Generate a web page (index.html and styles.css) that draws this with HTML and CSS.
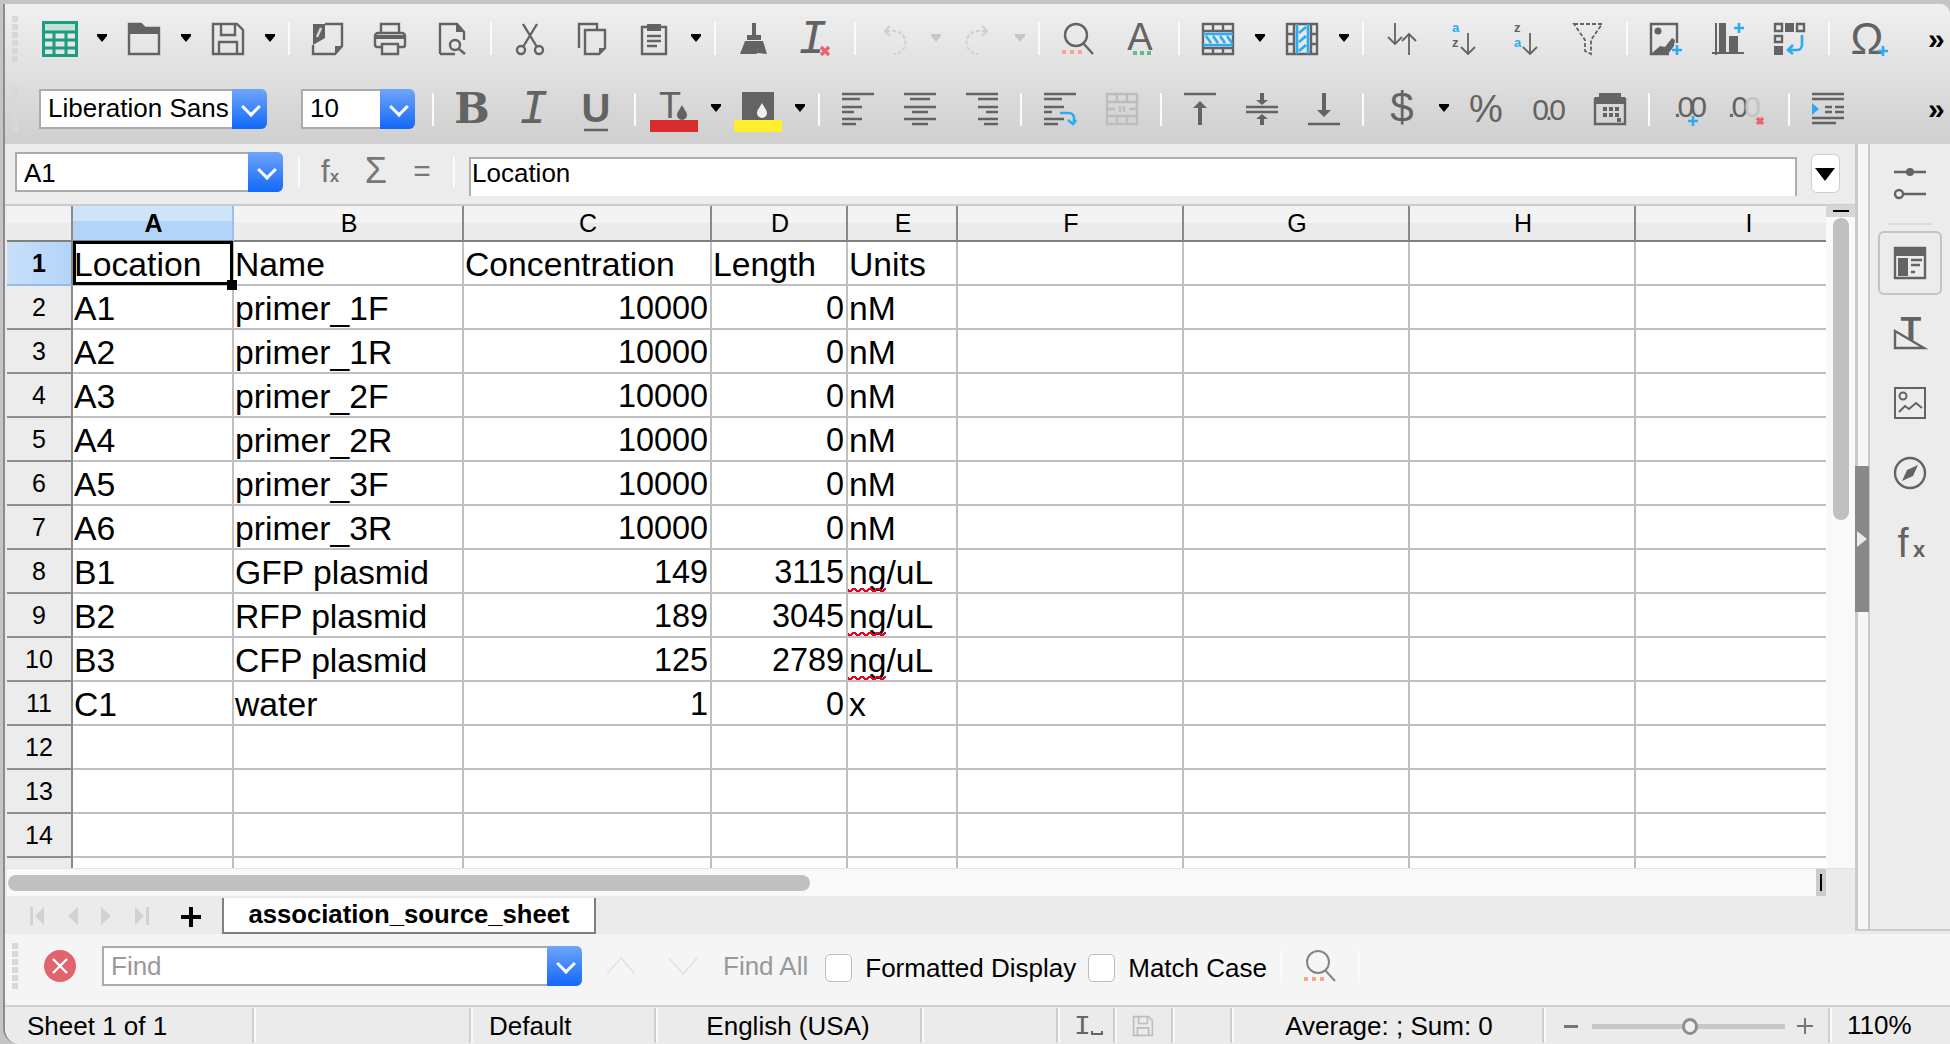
FILE: index.html
```html
<!DOCTYPE html>
<html lang="en">
<head>
    <meta charset="UTF-8">
    <title>association_source_sheet - LibreOffice Calc</title>
    <link rel="stylesheet" href="styles.css">
</head>
<body>
<div class="window">

    <div class="toolbars">
        <div class="toolbar first-row">
            <div class="grip"></div>
            <div class="tool"><svg class="ic wide" viewBox="0 0 36 36"><rect class="appband" x="2" y="2" width="32" height="8"/><path class="app" d="M1.5 1.5h33v33h-33zM1 11h34M1 19h34M1 27h34M12 11v24M24 11v24"/></svg></div>
            <div class="drop"></div>
            <div class="tool"><svg class="ic" viewBox="0 0 32 32"><path d="M1 1h12l4 4h14v26H1z"/><path class="f" d="M1 1h12l4 4h14v6H1z"/></svg></div>
            <div class="drop"></div>
            <div class="tool"><svg class="ic" viewBox="0 0 32 32"><path d="M1 1h24l6 6v24H1zM9 1v11h14V1M7 31V19h18v12"/></svg></div>
            <div class="drop"></div>
            <div class="sep"></div>
            <div class="tool"><svg class="ic" viewBox="0 0 32 32"><path d="M13 1h17v22l-7 8H1v-9"/><path class="f" d="M1 1h12v14L1 22zM23 31v-8h7z"/><path class="lite" d="M5 14l4-9"/></svg></div>
            <div class="tool"><svg class="ic" viewBox="0 0 32 32"><path d="M7 10V1h18v9M7 24H3a2 2 0 0 1-2-2v-9a3 3 0 0 1 3-3h24a3 3 0 0 1 3 3v9a2 2 0 0 1-2 2h-4M8 21h16v10H8z"/><path class="f" d="M2 12h28v4H2z"/></svg></div>
            <div class="tool"><svg class="ic" viewBox="0 0 32 32"><path d="M4 31V1h17l7 8v8M4 31h15"/><path class="f" d="M20 1l8 8h-8z"/><circle cx="19" cy="22" r="5"/><path d="M23 26l6 5"/></svg></div>
            <div class="sep"></div>
            <div class="tool"><svg class="ic" viewBox="0 0 32 32"><circle cx="7" cy="27" r="4"/><circle cx="25" cy="27" r="4"/><path d="M9 24L23 1M23 24L9 1"/></svg></div>
            <div class="tool"><svg class="ic" viewBox="0 0 32 32"><path d="M3 25V1h18v6M9 7h20v18l-6 6H9z"/><path class="f" d="M23 31v-6h6z"/></svg></div>
            <div class="tool"><svg class="ic" viewBox="0 0 32 32"><path d="M9 4H4v27h24V4h-5M9 13h14M9 18h14M9 23h10"/><path class="f" d="M9 1h14v7H9z"/></svg></div>
            <div class="drop"></div>
            <div class="sep"></div>
            <div class="tool"><svg class="ic" viewBox="0 0 32 32"><path class="f" d="M14 0h4v12h-4zM9 12h14v5H9zM7 18h18l4 13-9-1-2 1H2z"/></svg></div>
            <div class="tool"><svg class="ic" viewBox="0 0 32 32"><text class="glyph-i" x="-2" y="30">I</text><path class="redx" d="M21 24l8 8M29 24l-8 8"/></svg></div>
            <div class="sep"></div>
            <div class="tool"><svg class="ic off" viewBox="0 0 32 32"><path stroke-dasharray="4 2" d="M8 8h8a11.500 11.500 0 1 1 0 23"/><path d="M12 3L7 8l5 5"/></svg></div>
            <div class="drop off"></div>
            <div class="tool"><svg class="ic off" viewBox="0 0 32 32"><path stroke-dasharray="4 2" d="M24 8h-8a11.500 11.500 0 1 0 0 23"/><path d="M20 3l5 5-5 5"/></svg></div>
            <div class="drop off"></div>
            <div class="sep"></div>
            <div class="tool"><svg class="ic" viewBox="0 0 32 32"><circle cx="14" cy="12" r="11"/><path d="M21 20l10 11"/><path class="orange" d="M0 27h4v4H0zM8 27h4v4H8zM16 27h4v4h-4z"/></svg></div>
            <div class="tool"><svg class="ic" viewBox="0 0 32 32"><text class="glyph" x="16" y="27" font-size="38">A</text><path class="green" d="M9 28h4v4H9zM16 28h4v4h-4zM23 28h4v4h-4z"/></svg></div>
            <div class="sep"></div>
            <div class="tool"><svg class="ic" viewBox="0 0 32 32"><path d="M1 1h30v30H1zM1 8h30M1 25h30M11 1v7M21 1v7M11 25v6M21 25v6"/><path class="blue" d="M1 11h30M1 22h30M4 13l5 7M11 13l5 7M18 13l5 7M25 13l5 7"/></svg></div>
            <div class="drop"></div>
            <div class="tool"><svg class="ic" viewBox="0 0 32 32"><path d="M1 1h30v30H1zM8 1v30M25 1v30M1 11h7M1 21h7M25 11h6M25 21h6"/><path class="blue" d="M11 1v30M22 1v30M13 10l7-6M13 19l7-6M13 28l7-6"/></svg></div>
            <div class="drop"></div>
            <div class="sep"></div>
            <div class="tool"><svg class="ic thin" viewBox="0 0 32 32"><path d="M9 0v21M2 14l7 7 7-7M23 32V11M16 18l7-7 7 7"/></svg></div>
            <div class="tool"><svg class="ic thin" viewBox="0 0 32 32"><text class="tiny-blue" x="4" y="9">a</text><text class="tiny" x="4" y="24">z</text><path d="M20 10v21M13 24l7 7 7-7"/></svg></div>
            <div class="tool"><svg class="ic thin" viewBox="0 0 32 32"><text class="tiny" x="4" y="9">z</text><text class="tiny-blue" x="4" y="24">a</text><path d="M20 10v21M13 24l7 7 7-7"/></svg></div>
            <div class="tool"><svg class="ic thin" viewBox="0 0 32 32"><path stroke-dasharray="4 2" d="M2 1h28L19 17v14l-6-3V17z"/></svg></div>
            <div class="sep"></div>
            <div class="tool"><svg class="ic" viewBox="0 0 32 32"><path d="M27 20V1H1v30h18"/><circle class="f" cx="8" cy="8" r="3.500"/><path class="f" d="M1 31l9-8 5 1 7-9 3 2-1 6-6 8z"/><path class="blue" d="M27 22v10M22 27h10"/></svg></div>
            <div class="tool"><svg class="ic" viewBox="0 0 32 32"><path class="f" d="M3 0h2v32H3zM7 0h7v30H7zM17 13h9v17h-9zM0 29h32v2H0z"/><path class="blue" d="M27 0v10M22 5h10"/></svg></div>
            <div class="tool"><svg class="ic" viewBox="0 0 32 32"><path d="M1 1h7v7H1zM23 1h7v7h-7zM1 13h7v6H1z"/><path class="f" d="M11 0h9v9h-9zM0 23h9v9H0z"/><path class="blue" d="M28 12v10a5 5 0 0 1-5 5h-8M19 22l-5 5 5 4"/></svg></div>
            <div class="sep"></div>
            <div class="tool"><svg class="ic" viewBox="0 0 32 32"><text class="glyph" x="15" y="31" font-size="44">Ω</text><path class="blue" d="M31 23v10M26 28h10"/></svg></div>
            <div class="more">»</div>
        </div>

        <div class="toolbar">
            <div class="grip"></div>
            <div class="combo font-name"><span>Liberation Sans</span><b class="combo-btn"></b></div>
            <div class="combo font-size"><span>10</span><b class="combo-btn"></b></div>
            <div class="sep"></div>
            <div class="tool"><svg class="ic" viewBox="0 0 32 32"><text class="glyph bold-b" x="16" y="30" font-size="42">B</text></svg></div>
            <div class="tool"><svg class="ic" viewBox="0 0 32 32"><text class="glyph-i" x="1" y="30">I</text></svg></div>
            <div class="tool"><svg class="ic" viewBox="0 0 32 32"><text class="glyph bold-u" x="16" y="29" font-size="40">U</text><path d="M4 37h24"/></svg></div>
            <div class="sep"></div>
            <div class="tool"><svg class="swatch" viewBox="0 0 48 46"><text class="glyph" x="20" y="32" font-size="36">T</text><path class="f" d="M32 19c2 4 5 7 5 10a5 5 0 0 1-10 0c0-3 3-6 5-10z"/><rect class="red" y="34" width="48" height="12"/></svg></div>
            <div class="drop"></div>
            <div class="tool"><svg class="swatch" viewBox="0 0 48 46"><path class="f" d="M8 6h32v28H8z"/><path class="white" d="M28 17c2 4 5 7 5 10a5 5 0 0 1-10 0c0-3 3-6 5-10z"/><rect class="yellow" y="34" width="48" height="12"/></svg></div>
            <div class="drop"></div>
            <div class="sep"></div>
            <div class="tool"><svg class="ic" viewBox="0 0 32 32"><path d="M0 1h32M0 6h18M0 14h20M0 19h12M0 26h20M0 31h14"/></svg></div>
            <div class="tool"><svg class="ic" viewBox="0 0 32 32"><path d="M0 1h32M6 6h20M0 14h32M8 19h16M0 26h32M8 31h16"/></svg></div>
            <div class="tool"><svg class="ic" viewBox="0 0 32 32"><path d="M0 1h32M12 6h20M12 14h20M20 19h12M12 26h20M18 31h14"/></svg></div>
            <div class="sep"></div>
            <div class="tool"><svg class="ic" viewBox="0 0 32 32"><path d="M0 1h32M0 6h18M0 14h20M0 19h8M0 26h20M0 31h14"/><path class="blue" d="M16 20h9a5 5 0 0 1 5 5v6M24 27l5 4 3-4"/></svg></div>
            <div class="tool"><svg class="ic mute" viewBox="0 0 32 32"><path d="M1 1h30v30H1zM1 9h30M1 23h30M11 1v8M21 1v8M11 23v8M21 23v8M1 16h8M23 16h8M14 13v6M18 13v6"/></svg></div>
            <div class="sep"></div>
            <div class="tool"><svg class="ic" viewBox="0 0 32 32"><path d="M0 1h32"/><path class="f" d="M16 8l7 7h-5v17h-4V15H9z"/></svg></div>
            <div class="tool"><svg class="ic" viewBox="0 0 32 32"><path d="M0 14h32M0 19h32"/><path class="f" d="M14 0h4v7h4l-6 5-6-5h4zM16 21l6 5h-4v6h-4v-6h-4z"/></svg></div>
            <div class="tool"><svg class="ic" viewBox="0 0 32 32"><path d="M0 31h32"/><path class="f" d="M14 0h4v17h5l-7 7-7-7h5z"/></svg></div>
            <div class="sep"></div>
            <div class="tool"><svg class="ic" viewBox="0 0 32 32"><text class="glyph" x="16" y="29" font-size="42">$</text></svg></div>
            <div class="drop"></div>
            <div class="tool"><svg class="ic" viewBox="0 0 32 32"><text class="glyph" x="16" y="29" font-size="38">%</text></svg></div>
            <div class="tool"><svg class="ic" viewBox="0 0 32 32"><text class="glyph tight" x="15" y="27" font-size="30">0.0</text></svg></div>
            <div class="tool"><svg class="ic" viewBox="0 0 32 32"><path d="M1 6h30v25H1z"/><path class="f" d="M5 0h22v4h4v7H1V4h4zM9 14h4v4H9zM15 14h4v4h-4zM21 14h4v4h-4zM9 20h4v4H9zM15 20h4v4h-4zM21 20h4v4h-4zM23 25h4v4h-4z"/></svg></div>
            <div class="sep"></div>
            <div class="tool"><svg class="ic" viewBox="0 0 32 32"><text class="glyph tight" x="16" y="24" font-size="30">.00</text><path class="blue" d="M21 23v10M16 28h10"/></svg></div>
            <div class="tool"><svg class="ic" viewBox="0 0 32 32"><text class="glyph tight" x="8" y="24" font-size="30">.0<tspan class="mute-text">0</tspan></text><path class="redx" d="M23 25l6 6M29 25l-6 6"/></svg></div>
            <div class="sep"></div>
            <div class="tool"><svg class="ic" viewBox="0 0 32 32"><path d="M0 1h32M0 6h32M0 25h32M0 30h24"/><path d="M13 14h7M23 14h9M13 19h7M23 19h9"/><path class="fblue" d="M0 10l7 6-7 6z"/></svg></div>
            <div class="more">»</div>
        </div>
    </div>

    <div class="workspace">
        <div class="document">
            <div class="formula-bar">
                <div class="combo name-box"><span>A1</span><b class="combo-btn"></b></div>
                <div class="fsep"></div>
                <span class="f-btn fx">f<small>x</small></span>
                <span class="f-btn sum">Σ</span>
                <span class="f-btn eq">=</span>
                <div class="fsep"></div>
                <div class="formula-input">Location</div>
                <div class="formula-more"></div>
            </div>

            <div class="sheet-row">
                <div class="grid-wrap">
                    <table class="grid">
                        <colgroup>
                            <col class="c-head"><col class="c-a"><col class="c-b"><col class="c-c"><col class="c-d"><col class="c-e"><col class="c-w"><col class="c-w"><col class="c-w"><col class="c-w">
                        </colgroup>
                        <thead>
                            <tr><th class="corner"></th><th class="active">A</th><th>B</th><th>C</th><th>D</th><th>E</th><th>F</th><th>G</th><th>H</th><th>I</th></tr>
                        </thead>
                        <tbody>
                            <tr><th class="active">1</th><td class="cursor">Location</td><td>Name</td><td>Concentration</td><td>Length</td><td>Units</td><td></td><td></td><td></td><td></td></tr>
                            <tr><th>2</th><td>A1</td><td>primer_1F</td><td class="num">10000</td><td class="num">0</td><td>nM</td><td></td><td></td><td></td><td></td></tr>
                            <tr><th>3</th><td>A2</td><td>primer_1R</td><td class="num">10000</td><td class="num">0</td><td>nM</td><td></td><td></td><td></td><td></td></tr>
                            <tr><th>4</th><td>A3</td><td>primer_2F</td><td class="num">10000</td><td class="num">0</td><td>nM</td><td></td><td></td><td></td><td></td></tr>
                            <tr><th>5</th><td>A4</td><td>primer_2R</td><td class="num">10000</td><td class="num">0</td><td>nM</td><td></td><td></td><td></td><td></td></tr>
                            <tr><th>6</th><td>A5</td><td>primer_3F</td><td class="num">10000</td><td class="num">0</td><td>nM</td><td></td><td></td><td></td><td></td></tr>
                            <tr><th>7</th><td>A6</td><td>primer_3R</td><td class="num">10000</td><td class="num">0</td><td>nM</td><td></td><td></td><td></td><td></td></tr>
                            <tr><th>8</th><td>B1</td><td>GFP plasmid</td><td class="num">149</td><td class="num">3115</td><td><span class="spell">ng</span>/uL</td><td></td><td></td><td></td><td></td></tr>
                            <tr><th>9</th><td>B2</td><td>RFP plasmid</td><td class="num">189</td><td class="num">3045</td><td><span class="spell">ng</span>/uL</td><td></td><td></td><td></td><td></td></tr>
                            <tr><th>10</th><td>B3</td><td>CFP plasmid</td><td class="num">125</td><td class="num">2789</td><td><span class="spell">ng</span>/uL</td><td></td><td></td><td></td><td></td></tr>
                            <tr><th>11</th><td>C1</td><td>water</td><td class="num">1</td><td class="num">0</td><td>x</td><td></td><td></td><td></td><td></td></tr>
                            <tr><th>12</th><td></td><td></td><td></td><td></td><td></td><td></td><td></td><td></td><td></td></tr>
                            <tr><th>13</th><td></td><td></td><td></td><td></td><td></td><td></td><td></td><td></td><td></td></tr>
                            <tr><th>14</th><td></td><td></td><td></td><td></td><td></td><td></td><td></td><td></td><td></td></tr>
                            <tr><th></th><td></td><td></td><td></td><td></td><td></td><td></td><td></td><td></td><td></td></tr>
                        </tbody>
                    </table>
                </div>
                <div class="vscroll">
                    <div class="split-v"></div>
                    <div class="vthumb"></div>
                </div>
            </div>

            <div class="hscroll-row">
                <div class="hscroll">
                    <div class="hthumb"></div>
                    <div class="split-h"></div>
                </div>
            </div>

            <div class="tabs">
                <svg class="nav" viewBox="0 0 14 18"><path d="M0 0h3v18H0zM14 0v18L5 9z"/></svg>
                <svg class="nav" viewBox="0 0 14 18"><path d="M13 0v18L3 9z"/></svg>
                <svg class="nav" viewBox="0 0 14 18"><path d="M1 0v18l10-9z"/></svg>
                <svg class="nav" viewBox="0 0 14 18"><path d="M11 0h3v18h-3zM0 0v18l9-9z"/></svg>
                <svg class="add-sheet" viewBox="0 0 20 20"><path d="M8 0h4v8h8v4h-8v8H8v-8H0V8h8z"/></svg>
                <div class="tab">association_source_sheet</div>
            </div>
        </div>

        <div class="deck-strip">
            <div class="deck-handle"></div>
        </div>

        <div class="sidebar">
            <svg class="ic side-top" viewBox="0 0 32 32"><path d="M0 4h32M0 26h32"/><circle class="f" cx="16" cy="4" r="4"/><circle class="ring" cx="5" cy="26" r="4"/></svg>
            <div class="side-sep"></div>
            <div class="side-btn selected"><svg class="ic" viewBox="0 0 32 32"><path d="M1 1h30v30H1z"/><path class="f" d="M1 1h30v8H1zM4 11h10v18H4z"/><path d="M17 13h11M17 18h9M17 25h4"/></svg></div>
            <div class="side-btn"><svg class="ic" viewBox="0 0 32 32"><text class="glyph side-t" x="17" y="23" font-size="34">T</text><path d="M1 31V14l29 17z"/></svg></div>
            <div class="side-btn"><svg class="ic thin-ish" viewBox="0 0 32 32"><path d="M1 1h30v30H1z"/><circle cx="9" cy="9" r="3.500"/><path d="M5 25l6-6 4 3 7-6 6 5"/></svg></div>
            <div class="side-btn"><svg class="ic" viewBox="0 0 32 32"><circle cx="16" cy="16" r="15"/><path class="f" d="M24 8l-5 11-11 5 5-11z"/></svg></div>
            <div class="side-btn"><svg class="ic" viewBox="0 0 32 32"><text class="glyph" x="9" y="30" font-size="40">f<tspan class="side-x" x="25" y="30" font-size="22">x</tspan></text></svg></div>
        </div>
    </div>

    <div class="findbar">
        <div class="grip"></div>
        <div class="tool"><svg class="ic close" viewBox="0 0 32 32"><circle cx="16" cy="16" r="16"/><path d="M9 9l14 14M23 9L9 23"/></svg></div>
        <div class="combo find-box"><span>Find</span><b class="combo-btn"></b></div>
        <div class="tool"><svg class="ic pale" viewBox="0 0 32 32"><path d="M2 24L16 8l14 16"/></svg></div>
        <div class="tool"><svg class="ic pale" viewBox="0 0 32 32"><path d="M2 8l14 16L30 8"/></svg></div>
        <span class="find-all">Find All</span>
        <span class="check first"></span>
        <span class="label">Formatted Display</span>
        <span class="check"></span>
        <span class="label">Match Case</span>
        <div class="sep find-sep"></div>
        <div class="tool"><svg class="ic soft" viewBox="0 0 32 32"><circle cx="14" cy="12" r="11"/><path d="M21 20l10 11"/><path class="orange" d="M0 27h4v4H0zM8 27h4v4H8zM16 27h4v4h-4z"/></svg></div>
        <div class="sep"></div>
    </div>

    <div class="statusbar">
        <div class="cell s-sheet">Sheet 1 of 1</div>
        <div class="cell s-blank"></div>
        <div class="cell s-style">Default</div>
        <div class="cell s-lang">English (USA)</div>
        <div class="cell s-blank2"></div>
        <div class="cell s-ins"><span class="ins-i">I</span><svg class="ins-u" viewBox="0 0 12 5"><path d="M1 0v3h10V0"/></svg></div>
        <div class="cell s-save"><svg class="ic mute small" viewBox="0 0 32 32"><path d="M1 1h24l6 6v24H1zM9 1v11h14V1M7 31V19h18v12"/></svg></div>
        <div class="cell s-sel"></div>
        <div class="cell s-sum">Average: ; Sum: 0</div>
        <div class="cell s-zoom">
            <span class="z-minus"></span>
            <div class="z-track"><span class="z-knob"></span></div>
            <svg class="z-plus" viewBox="0 0 16 16"><path d="M7 0h2v7h7v2H9v7H7V9H0V7h7z"/></svg>
        </div>
        <div class="s-pct">110%</div>
    </div>
</div>
</body>
</html>
```

FILE: styles.css
```css
* {
    box-sizing: border-box;
}

html, body {
    margin: 0;
    padding: 0;
    width: 1950px;
    height: 1044px;
    overflow: hidden;
}

body {
    background: #c4c4c4;
    padding-left: 3px;
    padding-top: 4px;
    font-family: "Liberation Sans", Arial, sans-serif;
    font-size: 26px;
    color: #000;
}

.window {
    width: 1947px;
    height: 1040px;
    border-left: 2px solid #8c8c8c;
    border-radius: 0 10px 0 16px;
    overflow: hidden;
    display: flex;
    flex-direction: column;
    background: #ebebeb;
}

/* toolbars */
.toolbars {
    height: 140px;
    background: linear-gradient(to bottom, #f0f0f0, #cfcfcf);
    flex: none;
}

.toolbar {
    height: 70px;
    display: flex;
    align-items: center;
    padding-left: 7px;
}

.first-row {
    padding-bottom: 1px;
}

.grip {
    width: 6px;
    height: 46px;
    margin-right: 11px;
    flex: none;
    background: repeating-linear-gradient(to bottom, #d8d8d8 0, #d8d8d8 6px, transparent 6px, transparent 8px);
}

.tool {
    width: 62px;
    height: 46px;
    flex: none;
    display: flex;
    align-items: center;
    justify-content: center;
}

.drop {
    width: 22px;
    flex: none;
    display: flex;
    justify-content: center;
}

.drop::before {
    content: "";
    width: 0;
    height: 0;
    border-top: 6px solid #000;
    border-left: 5px solid transparent;
    border-right: 5px solid transparent;
    box-shadow: 0 -2px 0 #000;
}

.drop.off::before {
    border-top-color: #c6c6c6;
    box-shadow: 0 -2px 0 #c6c6c6;
}

.sep {
    width: 2px;
    height: 33px;
    margin: 0 7px;
    background: #fbfbfb;
    flex: none;
}

.more {
    margin-left: auto;
    margin-right: 6px;
    font-size: 30px;
    font-weight: bold;
    line-height: 30px;
    width: 16px;
    flex: none;
}

/* icons */
.ic {
    width: 32px;
    height: 32px;
    overflow: visible;
    fill: none;
    stroke: #636363;
    stroke-width: 2.4;
    flex: none;
}

.ic.wide {
    width: 36px;
    height: 36px;
}

.ic.thin path {
    stroke-width: 1.8;
}

.swatch {
    width: 48px;
    height: 46px;
    fill: none;
    stroke: none;
}

.f {
    fill: #636363;
    stroke: none;
}

.fblue {
    fill: #2aabf2;
    stroke: none;
}

.white {
    fill: #f0f0f0;
}

.red {
    fill: #d92d2d;
}

.yellow {
    fill: #ffee2b;
}

.app {
    stroke: #1c9c80;
    stroke-width: 3;
}

.appband {
    fill: #bfe3d8;
    stroke: none;
}

.lite {
    stroke: #d8d8d8;
}

.blue {
    stroke: #2aabf2;
    stroke-width: 2.6;
}

.redx {
    stroke: #e8626f;
    stroke-width: 3.2;
}

.orange {
    fill: #f6a78f;
    stroke: none;
}

.green {
    fill: #57c08c;
    stroke: none;
}

.off {
    stroke: #cfcfcf;
    stroke-width: 2;
}

.mute {
    stroke: #bdbdbd;
}

.pale {
    stroke: #e2e2e2;
    stroke-width: 1.500;
}

.soft {
    stroke: #858585;
    stroke-width: 2;
}

.glyph {
    font-family: "Liberation Sans", Arial, sans-serif;
    fill: #636363;
    stroke: none;
    text-anchor: middle;
}

.bold-b {
    font-family: "DejaVu Serif", serif;
    font-weight: bold;
}

.bold-u {
    font-family: "Liberation Sans", Arial, sans-serif;
    font-weight: bold;
}

.tight {
    letter-spacing: -4px;
}

.mute-text {
    fill: #c4c4c4;
}

.glyph-i {
    font-family: "Liberation Mono", monospace;
    font-style: italic;
    font-size: 48px;
    fill: #636363;
    stroke: none;
}

.tiny, .tiny-blue {
    font-family: "Liberation Sans", Arial, sans-serif;
    font-weight: bold;
    font-size: 13px;
    stroke: none;
    fill: #636363;
}

.tiny-blue {
    fill: #2aabf2;
}

/* combos */
.combo {
    height: 40px;
    display: flex;
    align-items: center;
    background: #fff;
    border: 2px solid #ababab;
    border-right: 0;
    border-radius: 0 6px 6px 0;
    position: relative;
    padding-left: 7px;
    flex: none;
    line-height: 36px;
}

.combo-btn {
    position: absolute;
    right: 0;
    top: -2px;
    width: 35px;
    height: 40px;
    border-radius: 0 6px 6px 0;
    background: linear-gradient(to bottom, #6fa5fb, #1268f8);
}

.combo-btn::after {
    content: "";
    position: absolute;
    left: 12px;
    top: 11px;
    width: 11px;
    height: 11px;
    border-right: 3px solid #fff;
    border-bottom: 3px solid #fff;
    transform: rotate(45deg);
}

.font-name {
    width: 228px;
    margin-left: 10px;
    padding-bottom: 2px;
}

.font-size {
    width: 114px;
    margin-left: 34px;
    margin-right: 10px;
    padding-bottom: 2px;
}

/* formula bar */
.workspace {
    height: 790px;
    display: flex;
    flex: none;
}

.document {
    width: 1850px;
    display: flex;
    flex-direction: column;
    flex: none;
}

.formula-bar {
    height: 62px;
    display: flex;
    align-items: flex-start;
    padding-left: 10px;
    background: #ececec;
    border-bottom: 2px solid #cbcbcb;
    flex: none;
}

.name-box {
    width: 268px;
    margin-top: 8px;
    padding-top: 1px;
}

.fsep {
    width: 2px;
    height: 30px;
    margin: 13px 15px 0;
    background: #fbfbfb;
    flex: none;
}

.f-btn {
    color: #777;
    flex: none;
    text-align: center;
    line-height: 54px;
}

.fx {
    width: 36px;
    font-size: 32px;
    margin-left: -3px;
}

.fx small {
    font-size: 17px;
    font-weight: bold;
}

.sum {
    width: 36px;
    margin: 0 0 0 10px;
    font-size: 36px;
}

.eq {
    width: 34px;
    margin: 0 -1px 0 11px;
    font-size: 30px;
}

.formula-input {
    width: 1328px;
    height: 39px;
    margin-top: 13px;
    margin-left: -1px;
    padding-left: 1px;
    background: #fff;
    border: 2px solid #aeaeae;
    border-bottom: 0;
    line-height: 28px;
    flex: none;
}

.formula-more {
    width: 29px;
    height: 39px;
    margin-top: 10px;
    margin-left: 14px;
    background: #fff;
    border: 1px solid #cfcfcf;
    border-radius: 6px;
    position: relative;
    flex: none;
}

.formula-more::after {
    content: "";
    position: absolute;
    left: 3px;
    top: 13px;
    border-top: 13px solid #000;
    border-left: 10px solid transparent;
    border-right: 10px solid transparent;
}

/* grid */
.sheet-row {
    height: 662px;
    display: flex;
    flex: none;
}

.grid-wrap {
    width: 1819px;
    height: 662px;
    margin-left: 2px;
    overflow: hidden;
    background: #fff;
    flex: none;
}

.grid {
    width: 1855px;
    table-layout: fixed;
    border-collapse: separate;
    border-spacing: 0;
}

.c-head { width: 66px; }
.c-a { width: 161px; }
.c-b { width: 230px; }
.c-c { width: 248px; }
.c-d { width: 136px; }
.c-e { width: 110px; }
.c-w { width: 226px; }

.grid thead th {
    height: 36px;
    padding: 0 0 0 2px;
    font-weight: normal;
    font-size: 25px;
    background: linear-gradient(to bottom, #f3f3f3 50%, #ebebeb 50%);
    border-right: 2px solid #8a8a8a;
    border-bottom: 2px solid #808080;
    line-height: 32px;
}

.grid thead th.active {
    font-weight: bold;
    background: linear-gradient(to bottom, #cfe3fb 45%, #b2d4f9 45%);
    border-right-color: #9cc0e8;
}

.grid tbody th {
    height: 44px;
    padding: 0;
    font-weight: normal;
    font-size: 25px;
    background: #ececec;
    border-right: 2px solid #8a8a8a;
    border-bottom: 2px solid #8f8f8f;
}

.grid tbody th.active {
    font-weight: bold;
    background: linear-gradient(to right, #c9dffa, #b2d4f9);
    border-bottom-color: #96bde8;
}

.grid td {
    height: 44px;
    padding: 2px 2px 0 1px;
    font-size: 33.700px;
    line-height: 40px;
    white-space: nowrap;
    overflow: hidden;
    border-right: 2px solid #c0c0c0;
    border-bottom: 2px solid #c0c0c0;
}

.grid td.num {
    font-size: 32.400px;
    text-align: right;
}

.grid td.cursor {
    position: relative;
    overflow: visible;
}

.grid td.cursor::before {
    content: "";
    position: absolute;
    left: 0;
    top: -1px;
    right: -1px;
    bottom: -1px;
    border: 3px solid #000;
}

.grid td.cursor::after {
    content: "";
    position: absolute;
    right: -5px;
    bottom: -6px;
    width: 10px;
    height: 10px;
    background: #000;
}

.spell {
    position: relative;
}

/* spell check squiggle */
.spell::after {
    content: "";
    position: absolute;
    left: -1px;
    right: 0;
    bottom: -1px;
    height: 4px;
    background:
        linear-gradient(135deg, transparent 35%, #e8001c 35%, #e8001c 65%, transparent 65%) 0 0 / 8px 4px repeat-x,
        linear-gradient(45deg, transparent 35%, #e8001c 35%, #e8001c 65%, transparent 65%) 4px 0 / 8px 4px repeat-x;
}

/* scrollbars */
.vscroll {
    width: 29px;
    margin-top: -1px;
    background: #f9f9f9;
    flex: none;
}

.split-v {
    height: 12px;
    background: #d6d6d6;
    position: relative;
}

.split-v::after {
    content: "";
    position: absolute;
    left: 7px;
    top: 5px;
    width: 16px;
    height: 2px;
    background: #000;
}

.vthumb {
    width: 16px;
    height: 302px;
    margin: 1px 0 0 7px;
    border-radius: 8px;
    background: #c0c0c0;
}

.hscroll-row {
    height: 28px;
    padding-left: 2px;
    border-top: 1px solid #e2e2e2;
    flex: none;
}

.hscroll {
    width: 1819px;
    height: 27px;
    display: flex;
    align-items: center;
    justify-content: space-between;
    background: #f9f9f9;
}

.hthumb {
    width: 802px;
    height: 16px;
    margin-left: 1px;
    border-radius: 8px;
    background: #c0c0c0;
}

.split-h {
    width: 10px;
    height: 27px;
    background: #cbcbcb;
    position: relative;
}

.split-h::after {
    content: "";
    position: absolute;
    left: 4px;
    top: 5px;
    width: 2px;
    height: 17px;
    background: #000;
}

/* sheet tabs */
.tabs {
    height: 38px;
    display: flex;
    align-items: flex-start;
    padding-left: 25px;
    background: #ebebeb;
    flex: none;
}

.nav {
    width: 14px;
    height: 18px;
    margin-top: 11px;
    margin-right: 21px;
    fill: #d2d2d2;
    flex: none;
}

.add-sheet {
    width: 20px;
    height: 20px;
    margin-top: 11px;
    margin-left: 11px;
    margin-right: 21px;
    flex: none;
}

.tab {
    width: 374px;
    height: 36px;
    margin-top: 2px;
    background: #fff;
    border: 2px solid #808080;
    border-top: 0;
    font-size: 25.700px;
    font-weight: bold;
    text-align: center;
    line-height: 33px;
    flex: none;
}

/* sidebar */
.deck-strip {
    width: 15px;
    height: 787px;
    background: #f6f6f6;
    border-left: 3px solid #cbcbcb;
    border-right: 2px solid #cbcbcb;
    border-bottom: 2px solid #cbcbcb;
    position: relative;
    flex: none;
}

.deck-handle {
    width: 14px;
    height: 146px;
    margin: 322px 0 0 -3px;
    background: #888;
    position: relative;
}

.deck-handle::after {
    content: "";
    position: absolute;
    left: 2px;
    top: 65px;
    border-left: 10px solid #ececec;
    border-top: 8px solid transparent;
    border-bottom: 8px solid transparent;
}

.sidebar {
    width: 80px;
    height: 787px;
    padding-top: 24px;
    display: flex;
    flex-direction: column;
    align-items: center;
    background: #ececec;
    border-bottom: 2px solid #cbcbcb;
    flex: none;
}

.ring {
    fill: #ececec;
}

.side-sep {
    width: 44px;
    height: 2px;
    margin: 23px 0 6px;
    background: #dcdcdc;
    flex: none;
}

.side-btn {
    width: 64px;
    height: 64px;
    margin-bottom: 6px;
    display: flex;
    align-items: center;
    justify-content: center;
    border: 2px solid transparent;
    border-radius: 6px;
    flex: none;
}

.side-btn.selected {
    border-color: #c3c3c3;
}

.side-t {
    font-weight: bold;
}

.side-x {
    font-weight: bold;
}

.thin-ish {
    stroke-width: 2;
}

/* find bar */
.findbar {
    height: 71px;
    display: flex;
    align-items: center;
    padding-left: 7px;
    padding-bottom: 7px;
    background: #f5f5f5;
    flex: none;
}

.close circle {
    fill: #e0636e;
    stroke: none;
}

.close path {
    stroke: #fff;
}

.find-box {
    width: 480px;
    margin-left: 11px;
    margin-right: 8px;
    color: #999;
}

.find-all {
    margin-left: 9px;
    color: #999;
    flex: none;
}

.check {
    width: 27px;
    height: 28px;
    margin-left: 12px;
    margin-top: 4px;
    background: #fff;
    border: 1px solid #bdbdbd;
    border-radius: 5px;
    flex: none;
}

.check.first {
    margin-left: 17px;
}

.label {
    margin-left: 13px;
    margin-top: 4px;
    flex: none;
}

.find-sep {
    margin-left: 13px;
}

/* status bar */
.statusbar {
    height: 39px;
    display: flex;
    align-items: center;
    border-top: 2px solid #cfcfcf;
    background: #ebebeb;
    flex: none;
}

.cell {
    height: 35px;
    display: flex;
    align-items: center;
    padding-top: 1px;
    border-right: 2px solid #cfcfcf;
    box-shadow: 2px 0 0 #fafafa;
    white-space: nowrap;
    flex: none;
}

.s-sheet { width: 249px; padding-left: 22px; }
.s-blank { width: 217px; }
.s-style { width: 185px; padding-left: 18px; }
.s-lang { width: 266px; justify-content: center; }
.s-blank2 { width: 136px; }
.s-ins { width: 57px; padding-left: 16px; color: #666; }
.s-save { width: 58px; justify-content: center; }
.s-sel { width: 59px; }
.s-sum { width: 312px; padding-left: 4px; justify-content: center; }

.ins-i {
    font-family: "Liberation Mono", monospace;
    font-size: 28px;
}

.ins-u {
    width: 12px;
    height: 5px;
    margin-top: 14px;
    fill: none;
    stroke: #666;
    stroke-width: 2;
}

.ic.small {
    width: 20px;
    height: 26px;
    stroke-width: 2.6;
}

.s-zoom {
    width: 286px;
    padding-left: 20px;
    gap: 14px;
}

.z-minus {
    width: 14px;
    height: 3px;
    background: #777;
    flex: none;
}

.z-track {
    width: 193px;
    height: 5px;
    background: #c8c8c8;
    position: relative;
    flex: none;
}

.z-knob {
    position: absolute;
    left: 90px;
    top: -6px;
    width: 16px;
    height: 17px;
    background: #f0f0f0;
    border: 3px solid #8e8e8e;
    border-radius: 50%;
}

.z-plus {
    width: 16px;
    height: 16px;
    margin-left: -2px;
    fill: #777;
    flex: none;
}

.s-pct {
    margin-left: 17px;
    flex: none;
}
```
